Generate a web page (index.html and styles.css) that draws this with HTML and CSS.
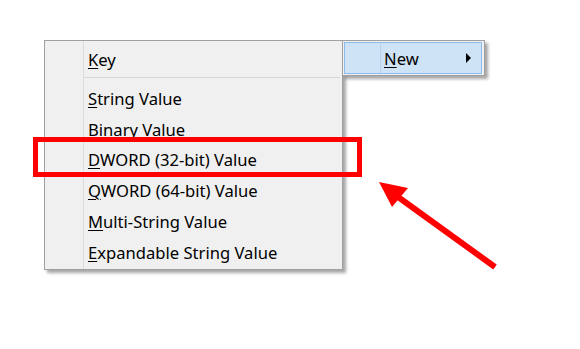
FILE: index.html
```
<!DOCTYPE html>
<html>
<head>
    <title>Registry New Menu</title>
    <link rel="stylesheet" href="styles.css">
</head>
<body>
    <div class="desktop">
        <div class="menu main-menu">
            <div class="item"><span class="label"><u>K</u>ey</span></div>
            <div class="separator"></div>
            <div class="item"><span class="label"><u>S</u>tring Value</span></div>
            <div class="item"><span class="label"><u>B</u>inary Value</span></div>
            <div class="item"><span class="label"><u>D</u>WORD (32-bit) Value</span></div>
            <div class="item"><span class="label"><u>Q</u>WORD (64-bit) Value</span></div>
            <div class="item"><span class="label"><u>M</u>ulti-String Value</span></div>
            <div class="item"><span class="label"><u>E</u>xpandable String Value</span></div>
        </div>

        <div class="menu sub-menu">
            <div class="item active">
                <span class="label"><u>N</u>ew</span>
                <span class="arrow"></span>
            </div>
        </div>

        <div class="highlight-box"></div>

        <svg class="pointer" width="580" height="349" viewBox="0 0 580 349">
            <line x1="387" y1="189" x2="495" y2="267" stroke="#ff0000" stroke-width="6"/>
            <polygon points="379,182 408,188 392,207" fill="#ff0000"/>
        </svg>
    </div>
</body>
</html>
```

FILE: styles.css
```
body {
    margin: 0;
    background: #ffffff;
    font-family: 'Noto Sans', 'Open Sans', sans-serif;
}
.desktop {
    position: relative;
    width: 580px;
    height: 349px;
    overflow: hidden;
}
.menu {
    position: absolute;
    background: #f0f0f0;
    border: 1px solid #a0a0a0;
    box-shadow: 3px 3px 3px rgba(0, 0, 0, 0.35);
    box-sizing: border-box;
}
.main-menu {
    left: 44px;
    top: 40px;
    width: 299px;
    height: 230px;
    padding: 3px 2px 1px 0;
    background: linear-gradient(to right, #f0f0f0 38px, #dcdcdc 38px, #dcdcdc 39px, #f0f0f0 39px);
}
.item {
    display: flex;
    align-items: center;
    height: 30.8px;
    padding-left: 43px;
    font-size: 16.6px;
    color: #000000;
}
.main-menu .item:first-child {
    height: 31px;
}
.separator {
    height: 1px;
    margin: 2px 0 5px 39px;
    background: #d7d7d7;
}
.label u {
    text-decoration-thickness: 1px;
    text-underline-offset: 2px;
}
.sub-menu {
    left: 342px;
    top: 40px;
    width: 143px;
    height: 36px;
    padding: 1px 2px 1px 1px;
}
.sub-menu .item {
    height: 32px;
    box-sizing: border-box;
    padding-left: 39px;
    padding-right: 10px;
    justify-content: space-between;
    background: linear-gradient(to right, #cfe3f6 35px, #b8d2ea 35px, #b8d2ea 36px, #cfe3f6 36px);
    border: 1px solid #8cbcec;
}
.arrow {
    width: 0;
    height: 0;
    border-top: 5px solid transparent;
    border-bottom: 5px solid transparent;
    border-left: 5px solid #000000;
}
.highlight-box {
    position: absolute;
    left: 33px;
    top: 137px;
    width: 329px;
    height: 40px;
    border: 5px solid #ff0000;
    box-sizing: border-box;
}
.pointer {
    position: absolute;
    left: 0;
    top: 0;
}
```
